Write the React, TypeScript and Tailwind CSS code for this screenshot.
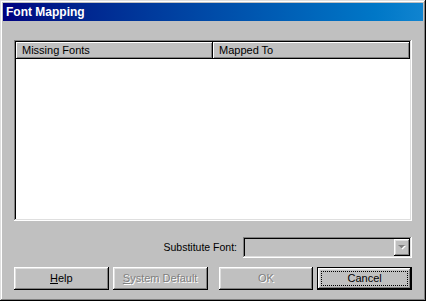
import React from "react";

const raised =
  "shadow-[inset_-1px_-1px_#000,inset_1px_1px_#fff,inset_-2px_-2px_#808080,inset_2px_2px_#dfdfdf]";
const sunken =
  "shadow-[inset_-1px_-1px_#fff,inset_1px_1px_#808080,inset_-2px_-2px_#dfdfdf,inset_2px_2px_#000]";
const disabledText = "text-[#808080] [text-shadow:1px_1px_0_#fff]";

export default function App() {
  return (
    <div
      className="w-[426px] h-[301px] bg-[#c0c0c0] p-[3px] flex flex-col text-black shadow-[inset_-1px_-1px_#000,inset_1px_1px_#dfdfdf,inset_-2px_-2px_#808080,inset_2px_2px_#fff]"
      style={{ fontFamily: '"Liberation Sans", Arial, sans-serif' }}
    >
      <div className="h-[18px] bg-gradient-to-r from-[#000080] to-[#1084d0] flex items-center pl-[3px] text-white font-bold text-[12px] leading-none">
        Font Mapping
      </div>
      <div className="flex flex-col px-[11px] pt-[19px]">
        <div className={`h-[181px] bg-white p-[2px] ${sunken}`}>
          <div className="flex h-[17px] text-[11px] leading-none">
            <div className="w-[197px] flex items-center pl-[6px] bg-[#c0c0c0] shadow-[inset_-1px_-1px_#000,inset_1px_1px_#fff,inset_-2px_-2px_#808080]">
              Missing Fonts
            </div>
            <div className="flex-1 flex items-center pl-[6px] bg-[#c0c0c0] shadow-[inset_-1px_-1px_#000,inset_1px_1px_#fff,inset_-2px_-2px_#808080]">
              Mapped To
            </div>
          </div>
        </div>
        <div className="mt-[16px] flex justify-end items-center">
          <span className="text-[10.5px] leading-none mr-[6px]">Substitute Font:</span>
          <div className={`w-[169px] h-[21px] bg-[#c0c0c0] p-[2px] flex justify-end ${sunken}`}>
            <div className={`w-[16px] h-[17px] flex items-center justify-center ${raised}`}>
              <svg width="8" height="6" viewBox="0 0 8 6">
                <polygon points="1,1 8,1 4.5,4.5" fill="#fff" />
                <polygon points="0,0 7,0 3.5,3.5" fill="#808080" />
              </svg>
            </div>
          </div>
        </div>
        <div className="mt-[9px] flex text-[11px] leading-none">
          <div className={`w-[95px] h-[23px] flex items-center justify-center ${raised}`}>
            <span>
              <span className="underline">H</span>elp
            </span>
          </div>
          <div className={`ml-[4px] w-[95px] h-[23px] flex items-center justify-center ${raised}`}>
            <span className={disabledText}>
              <span className="underline">S</span>ystem Default
            </span>
          </div>
          <div className={`ml-[11px] w-[95px] h-[23px] flex items-center justify-center ${raised}`}>
            <span className={disabledText}>OK</span>
          </div>
          <div className="ml-[4px] w-[95px] h-[23px] border border-black">
            <div className={`w-full h-full p-[3px] ${raised}`}>
              <div className="w-full h-full border border-dotted border-black flex items-center justify-center">
                Cancel
              </div>
            </div>
          </div>
        </div>
      </div>
    </div>
  );
}
